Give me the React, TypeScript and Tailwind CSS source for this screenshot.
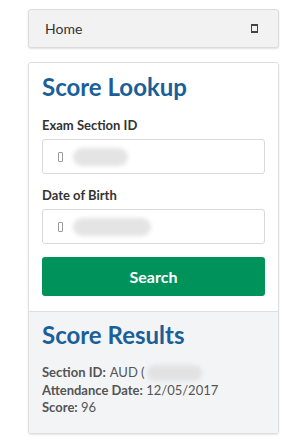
import React from "react";

// missing icon-font glyph, drawn as a small box
function Tofu({ className }: { className?: string }) {
  return <span className={`inline-block border ${className ?? ""}`} />;
}

function Field({ label, blurW }: { label: string; blurW: string }) {
  return (
    <div className="flex flex-col">
      <label className="text-[13px] leading-[18px] font-bold text-[#333]">{label}</label>
      <div className="mt-[5px] h-[35px] rounded-[3px] border border-[#d9d9d9] bg-white flex items-center pl-[15px] gap-[10px]">
        <Tofu className="w-[5px] h-[10px] border-[#9a9a9a] rounded-[1px]" />
        <div className={`h-[18px] ${blurW} rounded-full bg-[#e4e4e4] blur-[2px]`} />
      </div>
    </div>
  );
}

export default function App() {
  return (
    <div className="w-[300px] h-[441px] bg-white pt-[9px] font-['Lato',_'Liberation_Sans',_sans-serif]">
      <div className="ml-[28px] w-[251px] h-[39px] rounded-[3px] border border-[#dcdcdc] bg-[#f2f2f2] shadow-[0_1px_2px_rgba(0,0,0,0.12)] flex items-center justify-between pl-[16px] pr-[20px]">
        <span className="text-[14px] text-[#333]">Home</span>
        <Tofu className="w-[7px] h-[9px] border-[#444] border-y-2" />
      </div>

      <div className="ml-[28px] mt-[14px] w-[251px] rounded-[3px] border border-[#dedede] shadow-[0_1px_2px_rgba(0,0,0,0.1)] overflow-hidden">
        <div className="bg-white px-[13px] pt-[9px] pb-[15px] border-b border-[#dedede]">
          <h2 className="text-[24px] leading-[29px] font-bold text-[#1a5f99]">Score Lookup</h2>
          <div className="mt-[15px] flex flex-col gap-[12px]">
            <Field label="Exam Section ID" blurW="w-[55px]" />
            <Field label="Date of Birth" blurW="w-[78px]" />
          </div>
          <button className="mt-[13px] w-full h-[39px] rounded-[3px] bg-[#00925b] text-white text-[16px] font-bold">
            Search
          </button>
        </div>
        <div className="bg-[#f3f4f6] px-[13px] pt-[8px] pb-[16px]">
          <h2 className="text-[24px] leading-[29px] font-bold text-[#1a5f99]">Score Results</h2>
          <div className="mt-[15px] text-[13px] leading-[17.5px] text-[#555]">
            <div className="flex items-center">
              <span className="font-bold">Section ID:</span>
              <span className="ml-[4px]">AUD (</span>
              <span className="ml-[2px] w-[55px] h-[16px] rounded-full bg-[#e2e2e2] blur-[2px]" />
            </div>
            <div>
              <span className="font-bold">Attendance Date:</span> 12/05/2017
            </div>
            <div>
              <span className="font-bold">Score:</span> 96
            </div>
          </div>
        </div>
      </div>
    </div>
  );
}
